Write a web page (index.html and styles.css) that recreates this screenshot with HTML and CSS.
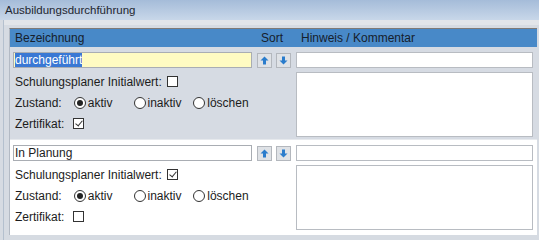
FILE: index.html
```html
<!DOCTYPE html>
<html lang="de">
<head>
  <meta charset="UTF-8">
  <title>Ausbildungsdurchführung</title>
  <link rel="stylesheet" href="styles.css">
</head>
<body>
  <div class="titlebar">Ausbildungsdurchführung</div>

  <div class="panel">
    <div class="liste">
      <div class="kopf">
        <span>Bezeichnung</span>
        <span class="kopf-sort">Sort</span>
        <span>Hinweis / Kommentar</span>
      </div>

      <!-- Eintrag 1 (ausgewählt) -->
      <div class="eintrag aktiv-zeile">
        <div class="links">
          <div class="feld gelb"><span class="markiert">durchgeführt</span></div>
          <div class="zeile">Schulungsplaner Initialwert: <span class="check"></span></div>
          <div class="zeile">
            <span class="lbl">Zustand:</span>
            <span class="opt"><span class="radio an"></span>aktiv</span>
            <span class="opt"><span class="radio"></span>inaktiv</span>
            <span class="opt"><span class="radio"></span>löschen</span>
          </div>
          <div class="zeile"><span class="lbl">Zertifikat:</span><span class="check an"></span></div>
        </div>
        <div class="sort">
          <span class="knopf"><svg width="9" height="9" viewBox="0 0 9 9"><polygon points="4.5,0.5 8.5,4.5 6,4.5 6,8.5 3,8.5 3,4.5 0.5,4.5"/></svg></span>
          <span class="knopf"><svg width="9" height="9" viewBox="0 0 9 9"><polygon points="4.5,8.5 8.5,4.5 6,4.5 6,0.5 3,0.5 3,4.5 0.5,4.5"/></svg></span>
        </div>
        <div class="rechts">
          <div class="feld"></div>
          <div class="textfeld"></div>
        </div>
      </div>

      <!-- Eintrag 2 -->
      <div class="eintrag">
        <div class="links">
          <div class="feld">In Planung</div>
          <div class="zeile">Schulungsplaner Initialwert: <span class="check an"></span></div>
          <div class="zeile">
            <span class="lbl">Zustand:</span>
            <span class="opt"><span class="radio an"></span>aktiv</span>
            <span class="opt"><span class="radio"></span>inaktiv</span>
            <span class="opt"><span class="radio"></span>löschen</span>
          </div>
          <div class="zeile"><span class="lbl">Zertifikat:</span><span class="check"></span></div>
        </div>
        <div class="sort">
          <span class="knopf"><svg width="9" height="9" viewBox="0 0 9 9"><polygon points="4.5,0.5 8.5,4.5 6,4.5 6,8.5 3,8.5 3,4.5 0.5,4.5"/></svg></span>
          <span class="knopf"><svg width="9" height="9" viewBox="0 0 9 9"><polygon points="4.5,8.5 8.5,4.5 6,4.5 6,0.5 3,0.5 3,4.5 0.5,4.5"/></svg></span>
        </div>
        <div class="rechts">
          <div class="feld"></div>
          <div class="textfeld"></div>
        </div>
      </div>
    </div>
  </div>
</body>
</html>
```

FILE: styles.css
```css
body {
  margin: 0;
  font-family: "Liberation Sans", Arial, sans-serif;
  font-size: 12px;
  color: #1c1c1c;
  background-color: #d6dbe2;
  overflow: hidden;
}

.titlebar {
  height: 20px;
  line-height: 20px;
  padding-left: 5px;
  font-size: 11.5px;
  background: linear-gradient(#a5bcd9, #c8d7e9);
  color: #1e2630;
}

.panel {
  margin-left: 3px;
  padding-top: 8px;
  padding-bottom: 5px;
  border-left: 1px solid #b4c0ce;
  background: linear-gradient(#e2e5e9 0, #e2e5e9 5px, #d6dbe2 5px);
}

.liste {
  margin-left: 5px;
  width: 527px;
  border-left: 1px solid #b3bac4;
  border-top: 1px solid #7f7a76;
}

.kopf {
  display: grid;
  grid-template-columns: 242px 44px 1fr;
  height: 18px;
  line-height: 18px;
  padding-left: 5px;
  background-color: #4889c8;
  color: #16202c;
}

.kopf-sort {
  padding-left: 4px;
}

.eintrag {
  display: grid;
  grid-template-columns: 239px 44px 237px;
  padding: 5px 3px 4px 3px;
  height: 86px;
  background-color: #fff;
}

.eintrag.aktiv-zeile {
  height: 83px;
  background-color: #d6dbe3;
  border-bottom: 1px solid #e6e9ed;
}

.feld {
  box-sizing: border-box;
  height: 16px;
  line-height: 14px;
  padding-left: 1px;
  border: 1px solid #a9adb3;
  background-color: #fff;
}

.feld.gelb {
  background-color: #fffbc2;
}

.markiert {
  background-color: #3a78d4;
  color: #fff;
}

.zeile {
  display: flex;
  align-items: center;
  height: 21px;
  padding-left: 2px;
}

.links .feld {
  margin-bottom: 3px;
}

.lbl {
  width: 58px;
}

.opt {
  display: flex;
  align-items: center;
  width: 60px;
}

.opt .radio {
  margin-left: 1px;
  margin-right: 2px;
}

.check {
  display: inline-block;
  position: relative;
  box-sizing: border-box;
  width: 11px;
  height: 11px;
  margin-left: 5px;
  border: 1px solid #333;
  background-color: #fff;
}

.lbl + .check {
  margin-left: 0;
}

.check.an::after {
  content: "";
  position: absolute;
  left: 3px;
  top: 0;
  width: 3px;
  height: 6px;
  border: solid #333;
  border-width: 0 1px 1px 0;
  transform: rotate(40deg);
}

.radio {
  display: inline-block;
  position: relative;
  box-sizing: border-box;
  width: 12px;
  height: 12px;
  border: 1px solid #333;
  border-radius: 50%;
  background-color: #fff;
}

.radio.an::after {
  content: "";
  position: absolute;
  left: 2px;
  top: 2px;
  width: 6px;
  height: 6px;
  border-radius: 50%;
  background-color: #222;
}

.sort {
  display: flex;
  gap: 4px;
  padding-left: 5px;
  padding-top: 1px;
}

.knopf {
  box-sizing: border-box;
  display: flex;
  align-items: center;
  justify-content: center;
  width: 15px;
  height: 15px;
  border: 1px solid #b3b7bd;
  background-color: #dfe2e6;
}

.knopf svg {
  fill: #2a7ccc;
}

.rechts .textfeld {
  box-sizing: border-box;
  height: 65px;
  margin-top: 4px;
  border: 1px solid #b8bcc2;
  background-color: #fff;
}

.rechts .feld {
  height: 16px;
  border-color: #b8bcc2;
}
```
